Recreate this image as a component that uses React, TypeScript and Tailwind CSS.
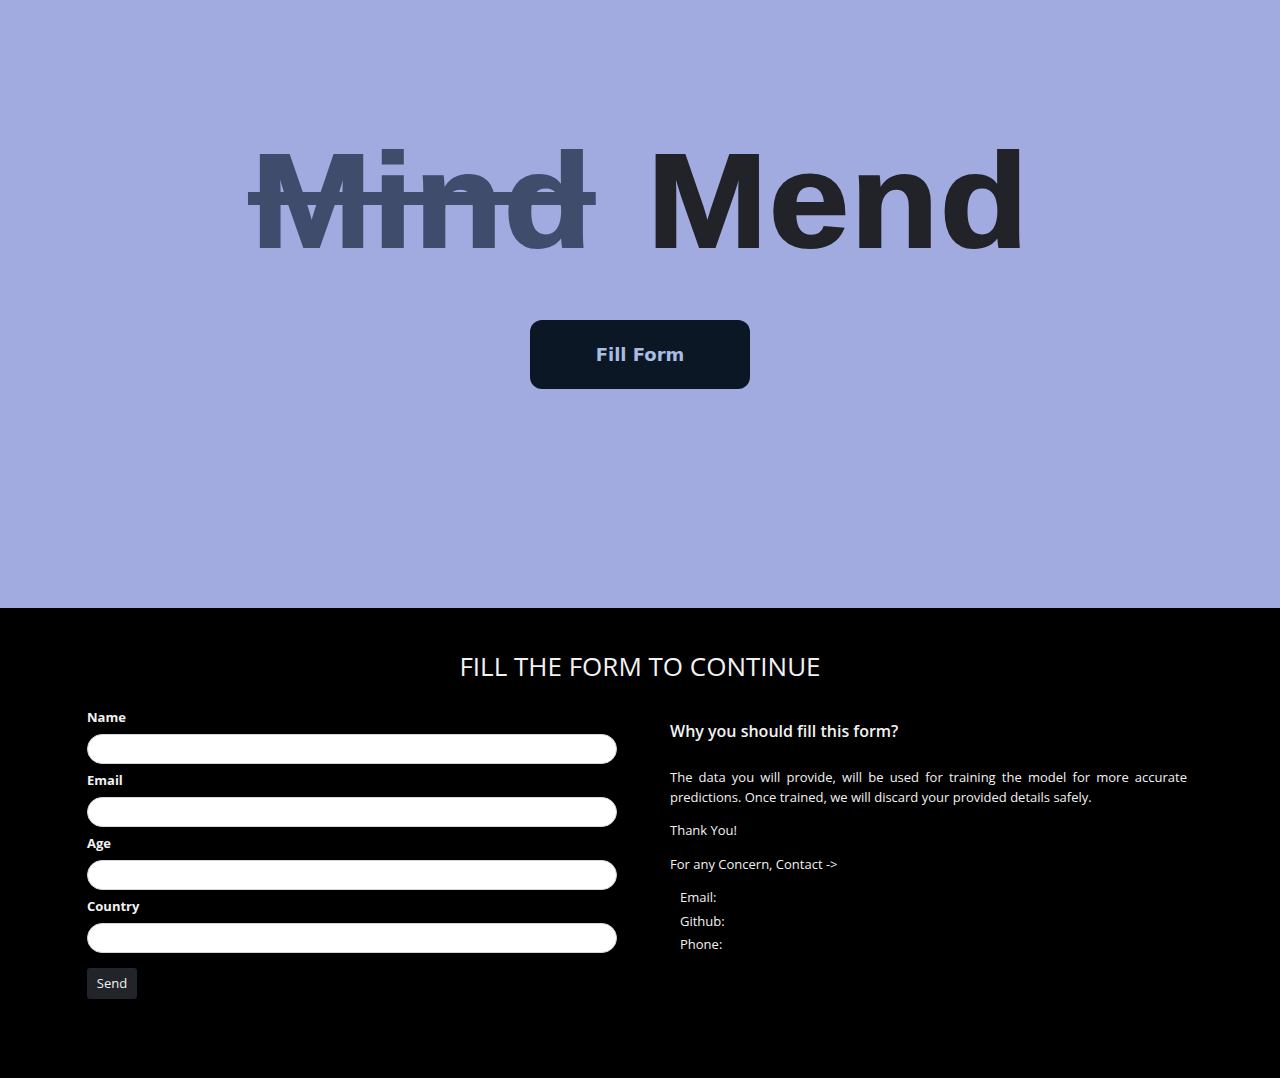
import React from 'react';

const fields = ['Name', 'Email', 'Age', 'Country'];

const App = () => {
  return (
    <div className="min-h-[1078px] bg-black" style={{ fontFamily: '"Open Sans", "Noto Sans", sans-serif' }}>
      {/* Hero */}
      <section className="h-[608px] bg-[#a1abe0] flex flex-col items-center">
        <h1
          className="mt-[139px] flex items-baseline gap-[50px] text-[134px] leading-[124px] font-bold tracking-[1px] scale-x-[1.08] [-webkit-text-stroke:2px_currentColor]"
          style={{ fontFamily: '"Liberation Sans", Arial, sans-serif' }}
        >
          <span className="relative text-[#3f4c6b]">
            Mind
            <span className="absolute left-[-3px] right-[-2px] top-[53px] h-[13px] bg-[#3f4c6b]" />
          </span>
          <span className="text-[#212328] mr-[-1px]">Mend</span>
        </h1>
        <button
          className="mt-[57px] w-[220px] h-[69px] rounded-[12px] bg-[#0c1725] text-[#a9bde0] text-[18px] font-bold"
          style={{ fontFamily: '"DejaVu Sans", Verdana, sans-serif' }}
        >
          Fill Form
        </button>
      </section>

      {/* Form section */}
      <section className="text-[#f2f2f2]">
        <h2 className="pt-[40px] text-center text-[26px] leading-[36px] font-normal">FILL THE FORM TO CONTINUE</h2>
        <div className="flex gap-[53px] pl-[87px] mt-[23px]">
          <form className="w-[530px] flex flex-col" onSubmit={(e) => e.preventDefault()}>
            {fields.map((f) => (
              <div key={f} className="flex flex-col mb-[6px]">
                <label className="text-[13px] leading-[20px] font-bold mb-[7px]">{f}</label>
                <input type="text" className="h-[30px] w-full rounded-full bg-white border border-gray-300 outline-none px-3 text-black" />
              </div>
            ))}
            <button className="mt-[9px] self-start w-[50px] h-[31px] rounded-[3px] bg-[#212529] text-[13px] text-[#f2f2f2]">Send</button>
          </form>
          <div className="w-[517px] pt-[9px]">
            <h3 className="text-[16px] leading-[30px] font-semibold">Why you should fill this form?</h3>
            <p className="mt-[21px] text-[13px] leading-[20px] text-justify">
              The data you will provide, will be used for training the model for more accurate predictions. Once trained, we will discard your provided details safely.
            </p>
            <p className="mt-[13px] text-[13px] leading-[20px]">Thank You!</p>
            <p className="mt-[14px] text-[13px] leading-[20px]">For any Concern, Contact -&gt;</p>
            <ul className="mt-[12px] pl-[10px] text-[13px] leading-[23.5px]">
              <li>Email:</li>
              <li>Github:</li>
              <li>Phone:</li>
            </ul>
          </div>
        </div>
      </section>
    </div>
  );
};

export default App;
